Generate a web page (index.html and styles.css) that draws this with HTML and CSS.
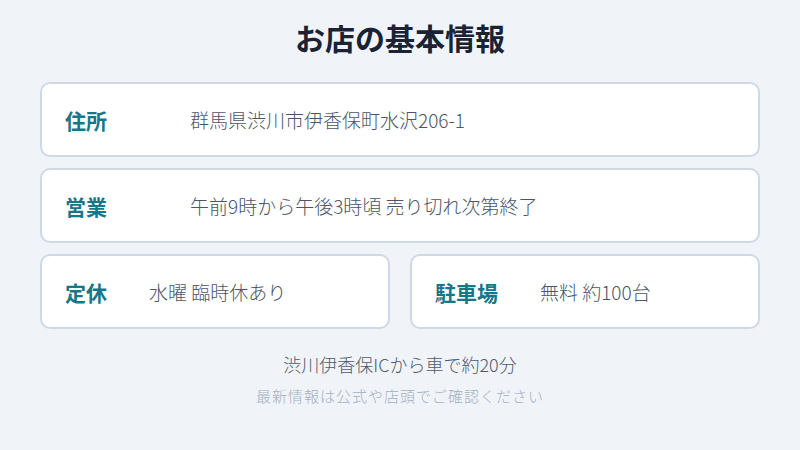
FILE: index.html
```html
<!DOCTYPE html>
<html lang="ja">
<head>
<meta charset="utf-8">
<link rel="stylesheet" href="styles.css">
</head>
<body>
<main class="page">
  <h1 class="title">お店の基本情報</h1>
  <section class="cards">
    <div class="card card-full">
      <span class="label">住所</span>
      <span class="value">群馬県渋川市伊香保町水沢206-1</span>
    </div>
    <div class="card card-full">
      <span class="label">営業</span>
      <span class="value">午前9時から午後3時頃 売り切れ次第終了</span>
    </div>
    <div class="row">
      <div class="card">
        <span class="label">定休</span>
        <span class="value">水曜 臨時休あり</span>
      </div>
      <div class="card">
        <span class="label">駐車場</span>
        <span class="value">無料 約100台</span>
      </div>
    </div>
  </section>
  <p class="access">渋川伊香保ICから車で約20分</p>
  <p class="note">最新情報は公式や店頭でご確認ください</p>
</main>
</body>
</html>
```
FILE: styles.css
```css
* { box-sizing: border-box; }
html, body {
  margin: 0;
  padding: 0;
  background: #f0f4f9;
}
body {
  font-family: "Noto Sans CJK JP", "Noto Sans", sans-serif;
  width: 800px;
  height: 450px;
  overflow: hidden;
}
.page {
  padding: 17px 40px 0;
  display: flex;
  flex-direction: column;
}
.title {
  margin: 0;
  text-align: center;
  font-size: 30px;
  line-height: 40px;
  font-weight: 700;
  color: #1a2233;
}
.cards {
  margin-top: 25px;
  display: flex;
  flex-direction: column;
  gap: 11px;
}
.row {
  display: flex;
  gap: 20px;
}
.row .card { flex: 1; }
.card {
  height: 75px;
  background: #ffffff;
  border: 2px solid #cfd9e6;
  border-radius: 10px;
  padding: 0 23px;
  display: flex;
  align-items: center;
  gap: 42px;
}
.label {
  font-size: 21px;
  font-weight: 700;
  color: #177789;
}
.card-full .label { min-width: 83px; }
.value {
  font-size: 19px;
  font-weight: 300;
  color: #4a5566;
}
.access {
  margin: 21px 0 0;
  text-align: center;
  font-size: 18px;
  font-weight: 300;
  line-height: 28px;
  color: #4f5a6b;
}
.note {
  margin: 6px 0 0;
  text-align: center;
  font-size: 15px;
  font-weight: 300;
  letter-spacing: 1px;
  line-height: 24px;
  color: #a3afc0;
}
```
